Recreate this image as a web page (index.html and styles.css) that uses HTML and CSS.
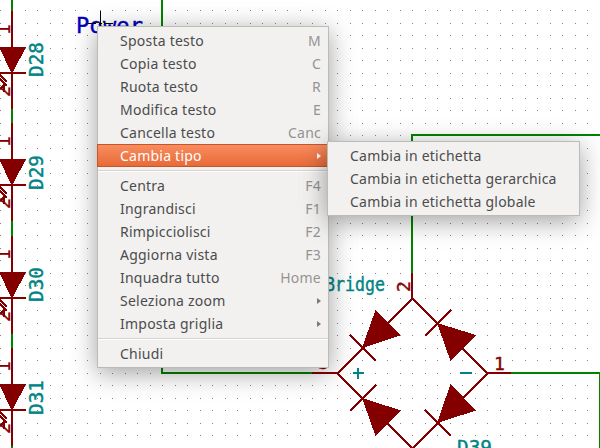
FILE: index.html
```html
<!DOCTYPE html>
<html lang="it">
<head>
<meta charset="utf-8">
<title>Eeschema</title>
<link rel="stylesheet" href="styles.css">
</head>
<body>
<main class="canvas">
<svg class="schematic" width="600" height="448" viewBox="0 0 600 448">
  <defs>
    <pattern id="grid" width="25" height="25" patternUnits="userSpaceOnUse">
      <path class="dot" d="M0 10h1v1h-1zM12 10h1v1h-1zM0 23h1v1h-1zM12 23h1v1h-1z"/>
    </pattern>
    <g id="diode">
      <path class="part" d="M12 -36V62"/>
      <path class="body" d="M-1 0H26L13 25H11Z"/>
      <path class="part" d="M0 26H26"/>
      <text class="pin" transform="translate(10 -12) rotate(-90)">1</text>
      <text class="pin" transform="translate(10 50) rotate(-90)">2</text>
      <path class="part" d="M0 28L7 35M0 32L7 39M0 42L4 38V45"/>
    </g>
  </defs>
  <rect width="600" height="448" fill="url(#grid)"/>
  <path class="wire" d="M12 0V448M162 0V373H312M412 273V135H600M511 373H600V448"/>
  <use href="#diode" y="47"/><use href="#diode" y="159"/><use href="#diode" y="272"/><use href="#diode" y="384"/>
  <text class="ref" transform="translate(43 77) rotate(-90)" textLength="35" lengthAdjust="spacingAndGlyphs">D28</text>
  <text class="ref" transform="translate(43 190) rotate(-90)" textLength="35" lengthAdjust="spacingAndGlyphs">D29</text>
  <text class="ref" transform="translate(43 302) rotate(-90)" textLength="35" lengthAdjust="spacingAndGlyphs">D30</text>
  <text class="ref" transform="translate(43 415) rotate(-90)" textLength="35" lengthAdjust="spacingAndGlyphs">D31</text>
  <text class="label" x="76" y="32.500" textLength="67">Power</text>
  <path class="cursor" d="M100.500 11V35M88 23.500H113"/>
  <path class="cursor-hit" d="M96 23.500H99M102 23.500H104"/>
  <path class="part" d="M412 273V299M312 373H338M487 373H511M412.500 298.500L337.500 373.500L412.500 448.500L487.500 373.500Z"/>
  <path class="part" d="M350 335L376 361M350 411L376 385M425 336L451 310M425 410L451 436"/>
  <path class="body" d="M362 348L375.500 310L401 335ZM362 398L401 410.500L375.500 436ZM437 323L476 335L450.500 361ZM437 423L450.500 384L476 410.500Z"/>
  <text class="ref" x="325" y="290.500" textLength="60" lengthAdjust="spacingAndGlyphs">Bridge</text>
  <text class="pin" transform="translate(410 292) rotate(-90)">2</text>
  <text class="pin" x="494" y="370">1</text>
  <text class="pin" x="318" y="369">3</text>
  <path class="mark" d="M353 373H364M358 368V379M460 373H472"/>
  <text class="ref" x="457" y="454" textLength="35" lengthAdjust="spacingAndGlyphs">D39</text>
</svg>
<nav class="menu main-menu">
  <div class="item"><span>Sposta testo</span><kbd>M</kbd></div>
  <div class="item"><span>Copia testo</span><kbd>C</kbd></div>
  <div class="item"><span>Ruota testo</span><kbd>R</kbd></div>
  <div class="item"><span>Modifica testo</span><kbd>E</kbd></div>
  <div class="item"><span>Cancella testo</span><kbd>Canc</kbd></div>
  <div class="item active"><span>Cambia tipo</span><i class="arrow"></i></div>
  <hr>
  <div class="item"><span>Centra</span><kbd>F4</kbd></div>
  <div class="item"><span>Ingrandisci</span><kbd>F1</kbd></div>
  <div class="item"><span>Rimpicciolisci</span><kbd>F2</kbd></div>
  <div class="item"><span>Aggiorna vista</span><kbd>F3</kbd></div>
  <div class="item"><span>Inquadra tutto</span><kbd>Home</kbd></div>
  <div class="item"><span>Seleziona zoom</span><i class="arrow"></i></div>
  <div class="item"><span>Imposta griglia</span><i class="arrow"></i></div>
  <hr>
  <div class="item"><span>Chiudi</span></div>
</nav>
<nav class="menu sub-menu">
  <div class="item"><span>Cambia in etichetta</span></div>
  <div class="item"><span>Cambia in etichetta gerarchica</span></div>
  <div class="item"><span>Cambia in etichetta globale</span></div>
</nav>
</main>
</body>
</html>
```

FILE: styles.css
```css
body { margin: 0; background: #fff; }
.canvas { position: relative; width: 600px; height: 448px; overflow: hidden; }
.schematic { display: block; }
.schematic path { shape-rendering: crispEdges; }
.dot { fill: #848484; }
.wire { fill: none; stroke: #008400; stroke-width: 2; }
.part { fill: none; stroke: #840000; stroke-width: 2; }
.body { fill: #840000; }
.mark { fill: none; stroke: #008484; stroke-width: 2; }
.cursor { stroke: #000; stroke-width: 1; }
.cursor-hit { stroke: #ffff3c; stroke-width: 1; }
.ref, .pin, .label { font-family: "DejaVu Sans Mono", monospace; stroke-width: .4; }
.ref { font-size: 20px; fill: #008484; stroke: #008484; }
.pin { font-size: 18px; fill: #840000; stroke: #840000; }
.label { font-size: 22px; fill: #0000c0; stroke: #0000c0; }

.menu {
  position: absolute;
  box-sizing: border-box;
  padding-top: 2px;
  background: #f2f1f0;
  border: 1px solid #bdbbb8;
  box-shadow: 0 5px 24px rgba(0, 0, 0, .38);
  font-family: "Noto Sans", sans-serif;
  font-size: 14px;
  letter-spacing: .23px;
  color: #4c4c4c;
}
.main-menu { left: 97px; top: 26px; width: 232px; height: 342px; }
.sub-menu { left: 327px; top: 141px; width: 253px; height: 75px; }
.item {
  display: flex;
  justify-content: space-between;
  align-items: center;
  box-sizing: border-box;
  height: 23px;
  padding: 0 7px 0 22px;
  line-height: 23px;
  white-space: nowrap;
}
.item kbd { font: inherit; color: #959390; }
.active {
  margin: 0 -1px;
  border: 1px solid #c4562c;
  background: linear-gradient(#f98c5f, #e86b38);
  color: #fff;
}
.arrow {
  width: 0;
  height: 0;
  border: solid transparent;
  border-width: 3px 0 3px 4px;
  border-left-color: #7c7a78;
}
.active .arrow { border-left-color: #fff; }
hr { height: 1px; margin: 3px 0 2px; border: 0; border-top: 1px solid #d5d3d0; background: #fff; }
```
